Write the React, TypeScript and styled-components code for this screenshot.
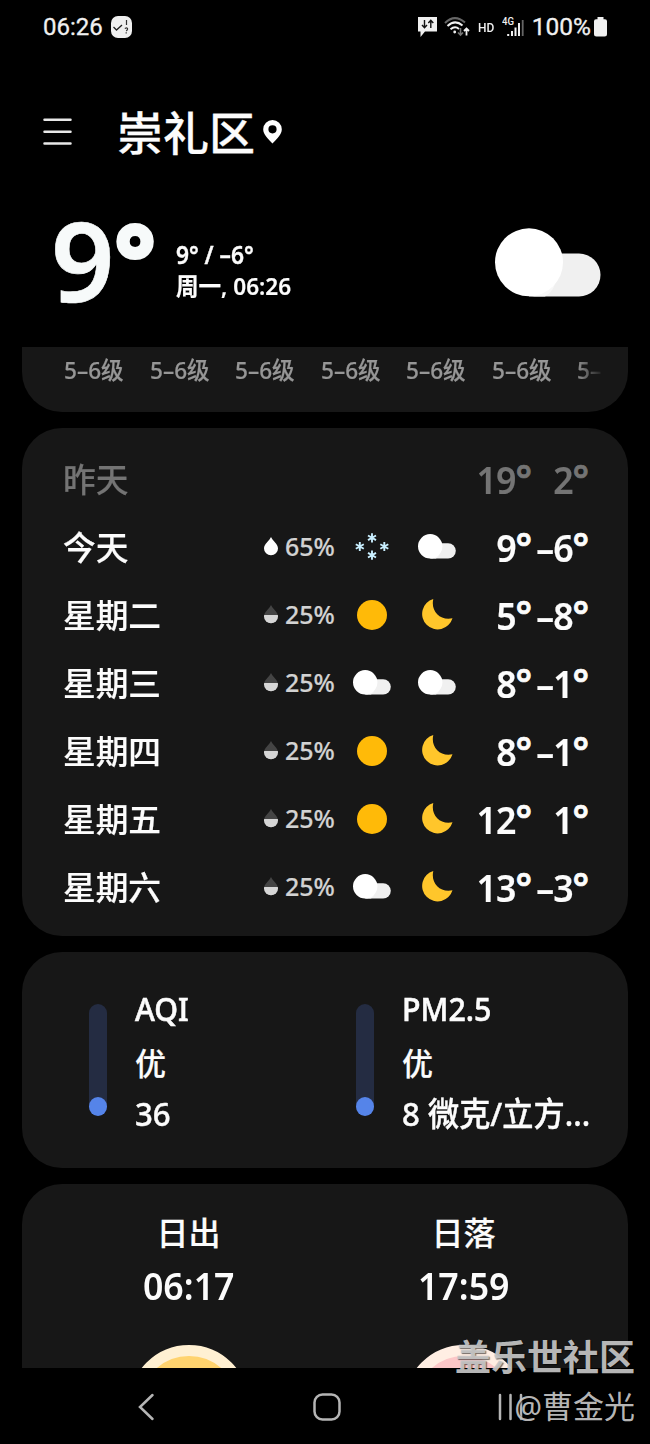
import React from "react";
import styled, { createGlobalStyle } from "styled-components";

const GlobalStyle = createGlobalStyle`
  * { box-sizing: border-box; }
  html, body { margin: 0; background: #000; }
  body {
    font-family: "Noto Sans", "Noto Sans CJK SC", sans-serif;
    color: #fcfcfc;
    overflow: hidden;
  }
  svg { display: block; flex: none; }
`;

const Screen = styled.div`
  position: relative;
  width: 650px;
  height: 1444px;
  display: flex;
  flex-direction: column;
  background: #000;
  overflow: hidden;
`;

/* Condensed text: keeps glyph height while narrowing the advance widths. */
const Text = styled.span<{
  $size: number;
  $weight?: number;
  $line?: number;
  $color?: string;
  $scale?: number;
  $origin?: string;
  $spacing?: number;
  $stroke?: number;
}>`
  display: block;
  white-space: nowrap;
  font-size: ${(p) => p.$size}px;
  font-weight: ${(p) => p.$weight ?? 500};
  line-height: ${(p) => p.$line ?? p.$size}px;
  color: ${(p) => p.$color ?? "inherit"};
  letter-spacing: ${(p) => p.$spacing ?? 0}px;
  transform: scaleX(${(p) => p.$scale ?? 1});
  transform-origin: ${(p) => p.$origin ?? "left"} center;
  -webkit-text-stroke: ${(p) => p.$stroke ?? 0}px currentColor;
`;

const StatusBar = styled.header`
  flex: none;
  height: 54px;
  padding: 0 43px 0 43px;
  display: flex;
  align-items: center;
  font-family: Roboto, sans-serif;
  color: #f0f0f0;
`;
const StatusIcons = styled.div`
  margin-left: auto;
  display: flex;
  align-items: center;
`;
const Slot = styled.div<{ $left?: number; $top?: number }>`
  margin-left: ${(p) => p.$left ?? 0}px;
  margin-top: ${(p) => p.$top ?? 0}px;
`;

const TitleBar = styled.div`
  flex: none;
  height: 156px;
  padding: 0 43px;
  display: flex;
  align-items: center;
`;

const Current = styled.section`
  flex: none;
  height: 137px;
  padding: 0 49px 0 51px;
  display: flex;
  align-items: flex-start;
`;
const BigTemp = styled.div`
  width: 128px;
  height: 120px;
  display: flex;
  align-items: flex-start;
`;
const Summary = styled.div`
  padding-top: 28px;
  display: flex;
  flex-direction: column;
`;

const Content = styled.main`
  flex: none;
  height: 1021px;
  padding: 0 22px;
  display: flex;
  flex-direction: column;
  gap: 16px;
  overflow: hidden;
`;
const Card = styled.section<{ $height: number }>`
  flex: none;
  height: ${(p) => p.$height}px;
  border-radius: 40px;
  background: #171717;
  overflow: hidden;
`;

const WindCard = styled(Card)`
  border-radius: 0 0 40px 40px;
  padding: 6px 27px 0 42px;
`;
const WindStrip = styled.div`
  display: flex;
  overflow: hidden;
  mask-image: linear-gradient(to right, #000 512px, transparent 540px);
`;
const WindItem = styled.div`
  flex: none;
  width: 85.5px;
`;

const ForecastCard = styled(Card)`
  padding: 18px 39px 0 41px;
`;
const DayRow = styled.div<{ $dim?: boolean }>`
  height: 68px;
  display: grid;
  grid-template-columns: 200px 87px 44px 21px 44px 1fr 57px;
  align-items: center;
  color: ${(p) => (p.$dim ? "#747474" : "#fcfcfc")};
`;
const Chance = styled.div`
  display: flex;
  align-items: center;
  gap: 7px;
  padding: 0 0 3px 1px;
`;
const IconCell = styled.div`
  display: flex;
  justify-content: center;
  padding-bottom: 3px;
`;
const TempCell = styled.div`
  display: flex;
  justify-content: flex-end;
  padding-bottom: 3px;
`;
const Temp = styled.div`
  display: flex;
  align-items: flex-start;
`;

const AirCard = styled(Card)`
  display: grid;
  grid-template-columns: 267px 1fr;
  padding: 31px 0 0 67px;
`;
const AirItem = styled.div`
  display: flex;
  gap: 28px;
`;
const Gauge = styled.div`
  flex: none;
  width: 18px;
  height: 112px;
  margin-top: 21px;
  border-radius: 9px;
  display: flex;
  align-items: flex-end;
  background: #242c42;
`;
const GaugeDot = styled.div`
  width: 18px;
  height: 19px;
  border-radius: 50%;
  background: #5584e9;
`;
const AirLines = styled.div`
  display: flex;
  flex-direction: column;
  margin-top: -1px;
`;

const SunCard = styled(Card)`
  padding: 22px 27px 0 29px;
  display: grid;
  grid-template-columns: 1fr 1fr;
`;
const SunItem = styled.div`
  display: flex;
  flex-direction: column;
  align-items: center;
`;
const Disc = styled.div<{ $outer: string; $inner: string }>`
  width: 120px;
  height: 120px;
  margin-top: 34px;
  border: 11px solid ${(p) => p.$outer};
  border-radius: 50%;
  background: ${(p) => p.$inner};
`;

const NavBar = styled.nav`
  flex: none;
  height: 76px;
  padding: 2px 124px 0 137px;
  display: flex;
  align-items: center;
  justify-content: space-between;
`;

const Watermark = styled.div`
  position: absolute;
  right: 15px;
  bottom: 15px;
  display: flex;
  flex-direction: column;
  align-items: flex-end;
  color: rgba(200, 200, 200, 0.92);
  text-shadow: 1px 1px 1px rgba(0, 0, 0, 0.55);
`;

const DegreeMark = styled(Text)`
  font-family: "Noto Sans", sans-serif;
`;

function Cloud({ width }: { width: number }) {
  return (
    <svg width={width} height={(width * 69) / 106} viewBox="0 0 106 69">
      <rect x="18" y="25.500" width="87.500" height="43" rx="21.500" fill="#f0f0f0" />
      <path d="M34 68.500H50Q64 61 62 34Z" fill="#f8f8f8" />
      <circle cx="34" cy="34.300" r="34" fill="#fff" />
    </svg>
  );
}

function Sun() {
  return (
    <svg width="30" height="30" viewBox="0 0 30 30">
      <circle cx="15" cy="15" r="15" fill="#ffba08" />
    </svg>
  );
}

function Moon() {
  return (
    <svg width="32" height="31" viewBox="0 0 32 31">
      <path d="M12.300 0A15.500 15.500 0 1 0 31.500 19.300C19 22 9.500 12 12.300 0Z" fill="#ffc62b" />
    </svg>
  );
}

function Snow() {
  const flake = (x: number, y: number) => (
    <path
      key={`${x}-${y}`}
      transform={`translate(${x} ${y})`}
      d="M0-4.600V4.600M-4-2.300L4 2.300M-4 2.300L4-2.300"
      stroke="#c9efff"
      strokeWidth="1.900"
    />
  );
  return (
    <svg width="34" height="27" viewBox="0 0 34 27">
      {flake(17, 4.800)}
      {flake(4.800, 13.500)}
      {flake(29.300, 13.500)}
      {flake(17, 22.200)}
    </svg>
  );
}

function Drop({ full }: { full: boolean }) {
  const d = "M7 0C8.500 3.500 14 7 14 11.500A7 6.800 0 0 1 0 11.500C0 7 5.500 3.500 7 0Z";
  return (
    <svg width="14" height="19" viewBox="0 0 14 19">
      <path d={d} fill={full ? "#fff" : "#444"} />
      {!full && <path d="M.2 10H13.800Q14 10.700 14 11.500A7 6.800 0 0 1 0 11.500Q0 10.700.2 10Z" fill="#d6d6d6" />}
    </svg>
  );
}

const icons: Record<string, React.ReactNode> = {
  cloud: <Cloud width={38} />,
  sun: <Sun />,
  moon: <Moon />,
  snow: <Snow />,
};

function RowTemp({ value }: { value: string }) {
  return (
    <Temp>
      <Text $size={38} $weight={600} $line={52} $scale={0.94} $origin="right" $spacing={-1} $stroke={0.2}>
        {value.replace("-", "–")}
      </Text>
      <DegreeMark $size={39} $weight={600} $line={52} $stroke={0.7}>°</DegreeMark>
    </Temp>
  );
}

type Day = { name: string; chance?: number; day?: string; night?: string; high: string; low: string };
const days: Day[] = [
  { name: "昨天", high: "19", low: "2" },
  { name: "今天", chance: 65, day: "snow", night: "cloud", high: "9", low: "-6" },
  { name: "星期二", chance: 25, day: "sun", night: "moon", high: "5", low: "-8" },
  { name: "星期三", chance: 25, day: "cloud", night: "cloud", high: "8", low: "-1" },
  { name: "星期四", chance: 25, day: "sun", night: "moon", high: "8", low: "-1" },
  { name: "星期五", chance: 25, day: "sun", night: "moon", high: "12", low: "1" },
  { name: "星期六", chance: 25, day: "cloud", night: "moon", high: "13", low: "-3" },
];

const air = [
  { title: "AQI", level: "优", value: "36" },
  { title: "PM2.5", level: "优", value: "8 微克/立方..." },
];

export default function App() {
  return (
    <Screen>
      <GlobalStyle />
      <StatusBar>
        <Text $size={24} $weight={400} $stroke={0.3}>06:26</Text>
        <Slot $left={8}>
          <svg width="21" height="22" viewBox="0 0 21 22">
            <rect width="21" height="22" rx="7" fill="#f0f0f0" />
            <path d="M2.500 11L5.500 14L11 9" fill="none" stroke="#222" strokeWidth="1.300" />
            <path d="M15.500 4V9M13.800 12.500Q16.800 11.200 16.600 13Q16.500 14 15.200 15M15.200 16.300V17.600" fill="none" stroke="#333" strokeWidth="1.200" />
          </svg>
        </Slot>
        <StatusIcons>
          <svg width="19" height="20" viewBox="0 0 19 20">
            <path d="M0 0H19V14.500H7L2.500 20V14.500H0Z" fill="#f0f0f0" />
            <path d="M6.500 3V10.500M4 8L6.500 10.700L9 8M12.800 11V3.500M10.300 6L12.800 3.300L15.300 6" fill="none" stroke="#111" strokeWidth="1.400" />
          </svg>
          <Slot $left={7}>
            <svg width="26" height="20" viewBox="0 0 26 20" fill="none" stroke="#f0f0f0" strokeWidth="2">
              <path d="M1 6Q10.500-3.500 21 5.500" stroke="#666" />
              <path d="M3.500 9Q11 2 18.500 8.500M6.500 12.300Q11 8.500 15 12" />
              <circle cx="10.700" cy="15" r="1.400" fill="#f0f0f0" stroke="none" />
              <path d="M16.500 11V18M14 15.500L16.500 18L19 15.500" stroke="#777" strokeWidth="1.600" />
              <path d="M22.500 18.500V12M20 14L22.500 11.500L25 14" strokeWidth="1.800" />
            </svg>
          </Slot>
          <Slot $left={8}>
            <Text $size={13} $scale={0.92}>HD</Text>
          </Slot>
          <Slot $left={6}>
            <svg width="22" height="20" viewBox="0 0 22 20">
              <text x="0" y="8" fontFamily="Roboto, sans-serif" fontSize="10" fontWeight="500" fill="#f0f0f0" textLength="12" lengthAdjust="spacingAndGlyphs">4G</text>
              <path d="M6.200 17V19M10 14V19M13.500 10.500V19M17 6V19" stroke="#f0f0f0" strokeWidth="2" />
              <path d="M20.700 3V19" stroke="#666" strokeWidth="1.800" />
            </svg>
          </Slot>
          <Slot $left={8}>
            <Text $size={24.5} $weight={400} $stroke={0.3}>100%</Text>
          </Slot>
          <Slot $left={3}>
            <svg width="13" height="20" viewBox="0 0 13 20">
              <path d="M3.500 0H9.500V2.200H11Q13 2.200 13 4.200V17Q13 19.500 10.500 19.500H2.500Q0 19.500 0 17V4.200Q0 2.200 2 2.200H3.500Z" fill="#f0f0f0" />
            </svg>
          </Slot>
        </StatusIcons>
      </StatusBar>

      <TitleBar>
        <svg width="29" height="28" viewBox="0 0 29 28">
          <path d="M1.500 1.800H27.500M1.500 13.800H27.500M1.500 25.500H27.500" stroke="#e8e8e8" strokeWidth="2.500" strokeLinecap="round" />
        </svg>
        <Slot $left={45}>
          <Text $size={46} $line={60} $stroke={0.3}>崇礼区</Text>
        </Slot>
        <Slot $left={8}>
          <svg width="19" height="24" viewBox="0 0 19 24">
            <path d="M9.500 0A9.300 9.300 0 0 0 .2 9.300C.2 14.500 5 19 9.500 23.500C14 19 18.800 14.500 18.800 9.300A9.300 9.300 0 0 0 9.500 0ZM9.500 5.200A4.100 4.100 0 1 1 9.500 13.400A4.100 4.100 0 0 1 9.500 5.200Z" fill="#fff" fillRule="evenodd" />
          </svg>
        </Slot>
      </TitleBar>

      <Current>
        <BigTemp>
          <Text $size={111} $weight={600} $line={99} $color="#f7fafa" $stroke={0.6}>9</Text>
          <DegreeMark $size={97} $weight={700} $line={95} $color="#f7fafa" $stroke={4}>°</DegreeMark>
        </BigTemp>
        <Summary>
          <Text $size={25} $weight={600} $line={32} $scale={0.91} $stroke={0.4}>9° / –6°</Text>
          <Text $size={24} $weight={600} $line={32} $scale={0.94} $stroke={0.2}>周一, 06:26</Text>
        </Summary>
        <Slot $left={197} $top={18}>
          <Cloud width={106} />
        </Slot>
      </Current>

      <Content>
        <WindCard $height={65}>
          <WindStrip>
            {Array.from({ length: 7 }, (_, i) => (
              <WindItem key={i}>
                <Text $size={24} $line={34} $scale={0.94} $color="#969696" $stroke={0.2}>5–6级</Text>
              </WindItem>
            ))}
          </WindStrip>
        </WindCard>

        <ForecastCard $height={508}>
          {days.map((d) => (
            <DayRow key={d.name} $dim={d.chance === undefined}>
              <Text $size={33} $line={48} $scale={0.99} $stroke={0.2}>{d.name}</Text>
              <Chance>
                {d.chance !== undefined && (
                  <>
                    <Drop full={d.chance > 50} />
                    <Text $size={25} $scale={1} $line={35} $color="#d2d2d2" $stroke={0.2}>{d.chance}%</Text>
                  </>
                )}
              </Chance>
              <IconCell>{d.day && icons[d.day]}</IconCell>
              <span />
              <IconCell>{d.night && icons[d.night]}</IconCell>
              <TempCell><RowTemp value={d.high} /></TempCell>
              <TempCell><RowTemp value={d.low} /></TempCell>
            </DayRow>
          ))}
        </ForecastCard>

        <AirCard $height={216}>
          {air.map((a) => (
            <AirItem key={a.title}>
              <Gauge><GaugeDot /></Gauge>
              <AirLines>
                <Text $size={33} $line={54} $scale={0.92} $stroke={0.6}>{a.title}</Text>
                <Text $size={31} $line={55} $stroke={0.2}>{a.level}</Text>
                <Text $size={33} $line={46} $scale={0.945} $stroke={0.4}>{a.value}</Text>
              </AirLines>
            </AirItem>
          ))}
        </AirCard>

        <SunCard $height={300}>
          <SunItem>
            <Text $size={32} $line={54} $stroke={0.2}>日出</Text>
            <Text $size={38} $line={51} $weight={600} $scale={0.94} $origin="center">06:17</Text>
            <Disc $outer="#fff0d2" $inner="#ffd36e" />
          </SunItem>
          <SunItem>
            <Text $size={32} $line={54} $stroke={0.2}>日落</Text>
            <Text $size={38} $line={51} $weight={600} $scale={0.94} $origin="center">17:59</Text>
            <Disc $outer="#ffeee3" $inner="#fcc7c8" />
          </SunItem>
        </SunCard>
      </Content>

      <NavBar>
        <svg width="18" height="28" viewBox="0 0 18 28">
          <path d="M15.500 2L3 14L15.500 26" fill="none" stroke="#b5b5b5" strokeWidth="2.500" strokeLinecap="round" />
        </svg>
        <svg width="28" height="28" viewBox="0 0 28 28">
          <rect x="1.500" y="1.500" width="25" height="25" rx="8" fill="none" stroke="#b5b5b5" strokeWidth="2.500" />
        </svg>
        <svg width="28" height="28" viewBox="0 0 28 28">
          <path d="M2 2V26M12.500 2V26M23 2V26" stroke="#b5b5b5" strokeWidth="2.500" strokeLinecap="round" />
        </svg>
      </NavBar>

      <Watermark>
        <Text $size={36} $weight={700} $line={50}>盖乐世社区</Text>
        <Text $size={31} $weight={400} $line={46}>@曹金光</Text>
      </Watermark>
    </Screen>
  );
}
